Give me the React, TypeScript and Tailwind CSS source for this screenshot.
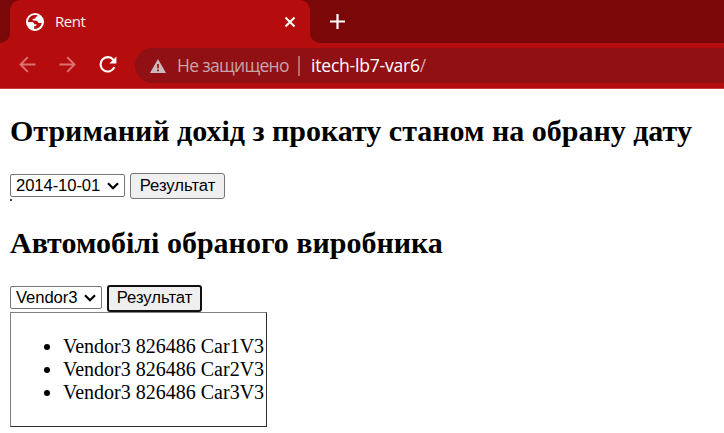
import React from 'react';

const uiFont = "font-['Open_Sans','Noto_Sans',sans-serif]";

function TabStrip() {
  return (
    <div className="flex h-[43px] bg-[#b50d0d]">
      <div className="h-[43px] w-[10px] rounded-br-[10px] bg-[#7a0808]" />
      <div className="w-[300px] bg-[#7a0808]">
        <div className="flex h-[43px] items-center rounded-t-[10px] bg-[#b50d0d] pl-4 pr-[14px]">
          <svg width="18" height="18" viewBox="0 0 18 18" className="shrink-0">
            <circle cx="9" cy="9" r="9" fill="#fff" />
            <path
              d="M7.4 2.2C4.2 2.8 2 5.600 2.100 9L6 9.100C7.600 9.200 8.200 10 8.100 11.200L10.600 11.300C10.800 12.500 9.800 13.300 8.200 13.300L8.200 15.900C11.900 16.200 15.200 13.600 15.700 10.100L12.700 9.900C11.700 9.700 11.900 7.900 10.700 7.700L7.300 7.600C6.400 7.400 6.300 6 7.300 5.700L9.100 5.500C10 5.200 9.200 4 10.200 3.700L11.600 3.300L11.600 2.600C10.400 2.100 8.800 2 7.400 2.200Z"
              fill="#b50d0d"
            />
          </svg>
          <span className={`ml-[11px] -mt-px text-[15px] leading-5 tracking-[-0.500px] text-[#fff0f0] ${uiFont}`}>Rent</span>
          <svg width="12" height="12" viewBox="0 0 12 12" className="ml-auto">
            <path d="M1.500 1.500L10.500 10.500M10.500 1.500L1.500 10.500" stroke="#fff" strokeWidth="2" />
          </svg>
        </div>
      </div>
      <div className="h-[43px] grow rounded-bl-[10px] bg-[#7a0808] pl-5 pt-[14px]">
        <svg width="15" height="15" viewBox="0 0 15 15">
          <path d="M7.500 0V15M0 7.500H15" stroke="#fff" strokeWidth="2.200" />
        </svg>
      </div>
    </div>
  );
}

function Toolbar() {
  return (
    <div className="flex h-[46px] items-start border-b border-[#c84040] bg-[#b50d0d] pl-[19px] pt-[5px]">
      <svg width="17" height="17" viewBox="0 0 17 17" fill="none" stroke="#dc7272" strokeWidth="1.900" className="mt-[8px]">
        <path d="M16.500 8.500H2M8.800 1.200L1.500 8.500L8.800 15.800" />
      </svg>
      <svg width="17" height="17" viewBox="0 0 17 17" fill="none" stroke="#dc7272" strokeWidth="1.900" className="ml-[23px] mt-[8px]">
        <path d="M0.500 8.500H15M8.200 1.200L15.500 8.500L8.200 15.800" />
      </svg>
      <svg width="18" height="18" viewBox="0 0 18 18" fill="none" className="ml-[23px] mt-[8px]">
        <path d="M14.400 3.800A7.200 7.200 0 1 0 15.400 11.200" stroke="#fff" strokeWidth="2.100" />
        <path d="M17.400 0.500V7.500H10.400Z" fill="#fff" />
      </svg>
      <div className={`ml-[18px] flex h-[35px] grow items-center rounded-l-full bg-[#901013] pl-[15px] text-[17.500px] leading-6 ${uiFont}`}>
        <svg width="16" height="14" viewBox="0 0 16 14" className="mt-[1px]">
          <path d="M8 0L16 14H0Z" fill="#c9bbbd" />
          <path d="M8 5V9.300M8 10.500V12.300" stroke="#901013" strokeWidth="1.700" />
        </svg>
        <span className="-mt-px ml-[11px] w-[112px] whitespace-nowrap tracking-[-0.700px] text-[#c9a3a6]">Не защищено</span>
        <span className="ml-[9px] h-5 w-[2px] bg-[#b56c6e]" />
        <span className="-mt-px ml-[11px] whitespace-nowrap tracking-[-0.200px] text-white">itech-lb7-var6<span className="text-[#d9a5a7]">/</span></span>
      </div>
    </div>
  );
}

function Select({ value, width }: { value: string; width: string }) {
  return (
    <div className={`mt-px flex h-[23px] shrink-0 items-center justify-between rounded-[2px] border border-[#767676] bg-white px-[5px] ${width}`}>
      <span className="whitespace-nowrap tracking-[-0.100px]">{value}</span>
      <svg width="12" height="8" viewBox="0 0 12 8" fill="none">
        <path d="M1 1.200L6 6.200L11 1.200" stroke="#000" strokeWidth="2.200" />
      </svg>
    </div>
  );
}

export default function App() {
  return (
    <div className="h-[433px] w-[724px] overflow-hidden bg-white text-black">
      <TabStrip />
      <Toolbar />
      <main className="pl-[10px] font-['Liberation_Serif',serif] text-[20px] leading-[23px]">
        <h2 className="mt-[25px] whitespace-nowrap text-[30px] font-bold leading-[34px]">Отриманий дохід з прокату станом на обрану дату</h2>
        <div className="mt-[25px] flex h-[26px] gap-[5px] font-['Liberation_Sans',sans-serif] text-[16.667px] leading-[19px]">
          <Select value="2014-10-01" width="w-[115px]" />
          <button className="h-[26px] w-[95px] rounded-[3px] border border-[#767676] bg-[#efefef] pb-px">Результат</button>
        </div>
        <div className="h-[2px] w-[2px] bg-[#444]" />
        <h2 className="mt-[25px] whitespace-nowrap text-[30px] font-bold leading-[34px]">Автомобілі обраного виробника</h2>
        <div className="mt-[25px] flex h-[27px] gap-[5px] font-['Liberation_Sans',sans-serif] text-[16.667px] leading-[19px]">
          <Select value="Vendor3" width="w-[92px]" />
          <button className="h-[27px] w-[95px] rounded-[3px] border-2 border-[#101010] bg-[#efefef] pb-[2px]">Результат</button>
        </div>
        <div className="h-[115px] w-[257px] border border-b-[#2d2d2d] border-l-[#808080] border-r-[#2d2d2d] border-t-[#808080] pt-[22px]">
          <ul>
            {['Car1V3', 'Car2V3', 'Car3V3'].map((car) => (
              <li key={car} className="flex items-center whitespace-nowrap pl-[33px]">
                <span className="mr-[13px] mt-px size-[6px] rounded-full bg-black" />
                Vendor3 826486 {car}
              </li>
            ))}
          </ul>
        </div>
      </main>
    </div>
  );
}
